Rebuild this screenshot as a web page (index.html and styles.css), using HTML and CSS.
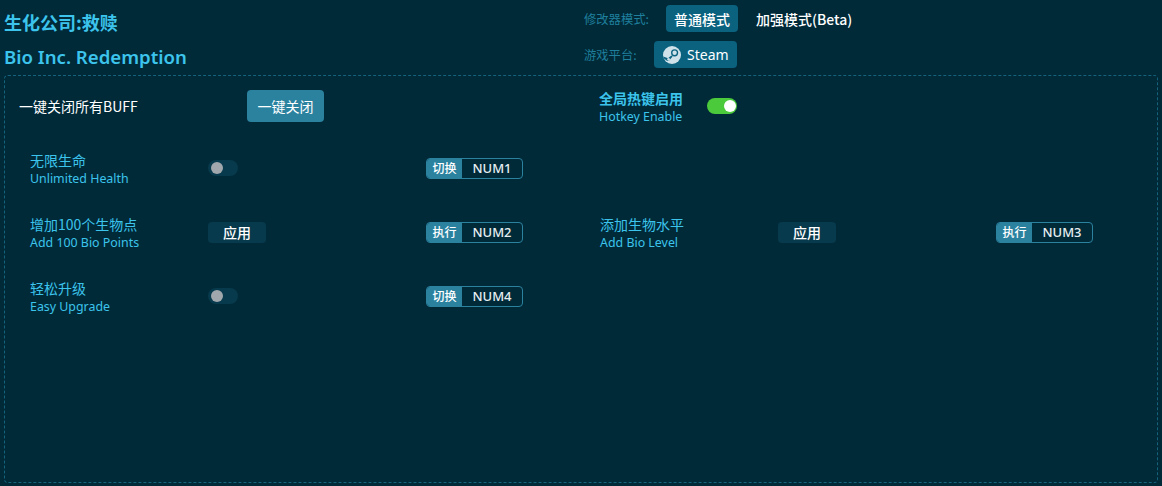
FILE: index.html
```html
<!DOCTYPE html>
<html lang="zh">
<head>
<meta charset="utf-8">
<title>生化公司:救赎</title>
<link rel="stylesheet" href="styles.css">
</head>
<body>
<header class="top">
  <div class="titles">
    <h1 class="title">生化公司:救赎</h1>
    <h2 class="title title-en">Bio Inc. Redemption</h2>
  </div>
  <div class="modes">
    <div class="mode-row">
      <span class="mode-label">修改器模式:</span>
      <span class="pill">普通模式</span>
      <span class="pill pill-off">加强模式(Beta)</span>
    </div>
    <div class="mode-row mode-row-2">
      <span class="mode-label mode-label-short">游戏平台:</span>
      <span class="pill pill-steam">
        <svg class="steam" viewBox="0 0 20 20" aria-hidden="true">
          <circle cx="10" cy="10" r="9" fill="#cfe2ea"/>
          <circle cx="12.6" cy="7.8" r="3.6" fill="#0b627f"/>
          <circle cx="12.6" cy="7.8" r="2.2" fill="#cfe2ea"/>
          <path d="M1.2 11.4 L6 13.3 L9.4 10.4 L10.6 11.6 L8 14.6 A2.4 2.4 0 0 1 4 15 L1.6 13.2 Z" fill="#0b627f"/>
          <circle cx="6.6" cy="14.4" r="1.4" fill="#cfe2ea"/>
        </svg>
        Steam
      </span>
    </div>
  </div>
</header>
<main class="panel">
  <div class="master">
    <div class="master-left">
      <span class="master-label">一键关闭所有BUFF</span>
      <button class="close-all">一键关闭</button>
    </div>
    <div class="master-right">
      <div class="label label-strong"><span class="zh">全局热键启用</span><span class="en">Hotkey Enable</span></div>
      <span class="switch switch-on"></span>
    </div>
  </div>
  <div class="grid">
    <div class="item">
      <div class="label"><span class="zh">无限生命</span><span class="en">Unlimited Health</span></div>
      <div class="control"><span class="switch"></span></div>
      <div class="hotkey"><span class="hk-type">切换</span><span class="hk-key">NUM1</span></div>
    </div>
    <div class="item"></div>
    <div class="item">
      <div class="label"><span class="zh">增加100个生物点</span><span class="en">Add 100 Bio Points</span></div>
      <div class="control"><button class="apply">应用</button></div>
      <div class="hotkey"><span class="hk-type">执行</span><span class="hk-key">NUM2</span></div>
    </div>
    <div class="item">
      <div class="label"><span class="zh">添加生物水平</span><span class="en">Add Bio Level</span></div>
      <div class="control"><button class="apply">应用</button></div>
      <div class="hotkey"><span class="hk-type">执行</span><span class="hk-key">NUM3</span></div>
    </div>
    <div class="item">
      <div class="label"><span class="zh">轻松升级</span><span class="en">Easy Upgrade</span></div>
      <div class="control"><span class="switch"></span></div>
      <div class="hotkey"><span class="hk-type">切换</span><span class="hk-key">NUM4</span></div>
    </div>
  </div>
</main>
</body>
</html>
```
FILE: styles.css
```css
* { box-sizing: border-box; }
html, body { margin: 0; height: 100%; }
body {
  width: 1162px;
  height: 486px;
  overflow: hidden;
  background: #002a38;
  color: #fff;
  font-family: "Noto Sans", "Noto Sans CJK SC", sans-serif;
  padding: 0 4px 3px;
  display: flex;
  flex-direction: column;
}
.top { display: flex; height: 75px; flex: none; }
.titles { width: 580px; padding-top: 7px; }
.title {
  margin: 0;
  font-size: 18px;
  line-height: 30px;
  height: 35px;
  font-weight: 700;
  color: #3cc4ec;
  font-family: "Noto Sans CJK SC", sans-serif;
}
.title-en { font-family: "Noto Sans", sans-serif; font-weight: 600; font-size: 18.6px; }
.modes { padding-top: 5px; }
.mode-row { display: flex; align-items: center; height: 27px; }
.mode-row-2 { margin-top: 9px; }
.mode-label {
  width: 82px;
  font-size: 12.3px;
  color: #1f7f9c;
  font-family: "Noto Sans CJK SC", sans-serif;
}
.mode-label-short { width: 70px; }
.pill {
  display: inline-flex;
  align-items: center;
  height: 27px;
  padding: 0 8px;
  border-radius: 4px;
  background: #0b627f;
  font-size: 14px;
  font-weight: 500;
  color: #fff;
  font-family: "Noto Sans CJK SC", sans-serif;
}
.pill-off { background: none; margin-left: 10px; padding: 0 8px; }
.pill-steam {
  font-family: "Noto Sans", sans-serif;
  font-weight: 400;
  gap: 5px;
  padding-right: 8px;
}
.steam { width: 20px; height: 20px; display: block; }
.panel {
  flex: 1;
  border: 1px dashed #14627c;
  border-radius: 4px;
  padding: 13px 0 0 14px;
}
.master { display: flex; height: 34px; align-items: center; }
.master-left { width: 580px; display: flex; align-items: center; }
.master-label {
  width: 228px;
  font-size: 14px;
  font-family: "Noto Sans CJK SC", sans-serif;
}
.close-all {
  width: 77px;
  height: 32px;
  border: 0;
  border-radius: 4px;
  background: #2a829f;
  color: #fff;
  font-size: 14px;
  font-family: "Noto Sans CJK SC", sans-serif;
  padding: 0;
}
.master-right { display: flex; align-items: center; }
.master-right .label { width: 108px; }
.label { display: flex; flex-direction: column; width: 178px; color: #3cc4ec; padding-top: 1px; }
.zh { font-size: 14px; line-height: 18px; font-family: "Noto Sans CJK SC", sans-serif; }
.en { font-size: 12.4px; line-height: 16px; margin-top: 2px; }
.label-strong .zh { font-weight: 700; }
.switch {
  display: block;
  position: relative;
  width: 30px;
  height: 16px;
  border-radius: 8px;
  background: #073a4c;
}
.switch::after {
  content: "";
  position: absolute;
  left: 2.5px;
  top: 2px;
  width: 12px;
  height: 12px;
  border-radius: 50%;
  background: #a0a8ad;
}
.switch-on { background: #4bca3c; }
.switch-on::after { left: 16.5px; background: #fff; }
.grid {
  display: grid;
  grid-template-columns: 570px 1fr;
  grid-auto-rows: 64px;
  padding: 27px 0 0 11px;
}
.item { display: flex; align-items: center; height: 36px; }
.control { width: 218px; display: flex; align-items: center; }
.apply {
  width: 58px;
  height: 21px;
  border: 0;
  border-radius: 4px;
  background: #073a4c;
  color: #fff;
  font-size: 14px;
  font-weight: 500;
  font-family: "Noto Sans CJK SC", sans-serif;
  padding: 0;
}
.hotkey {
  display: flex;
  width: 97px;
  height: 21px;
  border: 1px solid #2a829f;
  border-radius: 4px;
  overflow: hidden;
  align-items: stretch;
}
.hk-type {
  width: 35px;
  background: #2a829f;
  font-size: 12px;
  font-weight: 500;
  line-height: 18px;
  text-align: center;
  font-family: "Noto Sans CJK SC", sans-serif;
}
.hk-key {
  flex: 1;
  text-align: center;
  font-size: 13px;
  line-height: 19px;
  font-weight: 500;
  color: #e6eef1;
}
```
